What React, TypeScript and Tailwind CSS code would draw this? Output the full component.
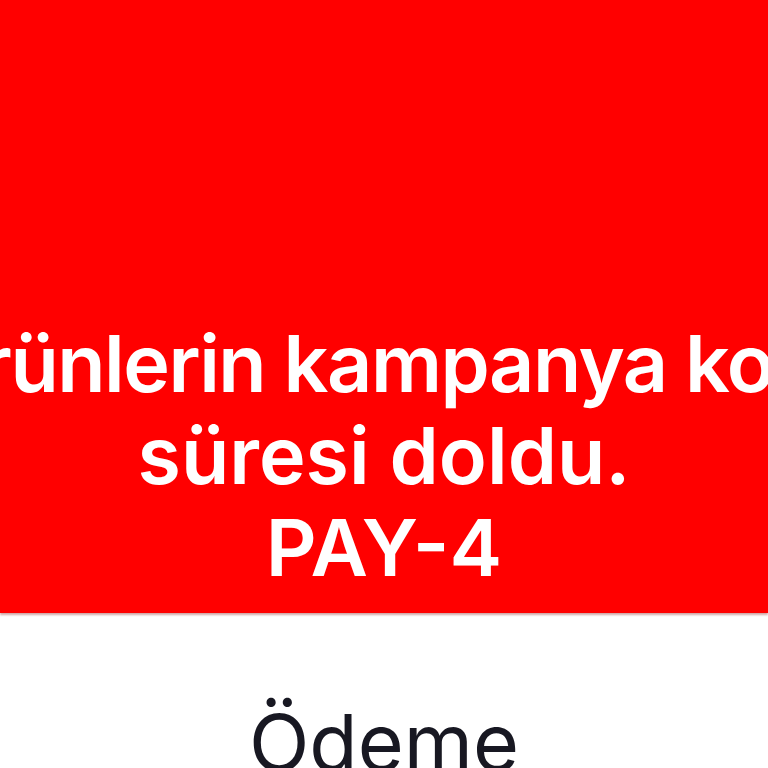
export default function App() {
  return (
    <div className="h-[768px] w-full overflow-hidden bg-white" style={{ fontFamily: 'Inter, "Noto Sans", sans-serif' }}>
      {/* Error banner */}
      <div className="flex h-[613px] flex-col items-center justify-end bg-[#ff0000] pb-[20px] shadow-[0_2px_2px_rgba(120,0,0,0.35)]">
        <div className="w-[1400px] shrink-0 text-center text-[79px] font-semibold leading-[92px] text-white">
          <p className="pl-[24px] tracking-[-1.5px]">Ürünlerin kampanya kodu</p>
          <p>süresi doldu.</p>
          <p>PAY-4</p>
        </div>
      </div>

      {/* Page title */}
      <div className="flex justify-center pt-[90px]">
        <h1 className="text-[79px] font-normal leading-none text-[#181822]">Ödeme</h1>
      </div>
    </div>
  );
}
